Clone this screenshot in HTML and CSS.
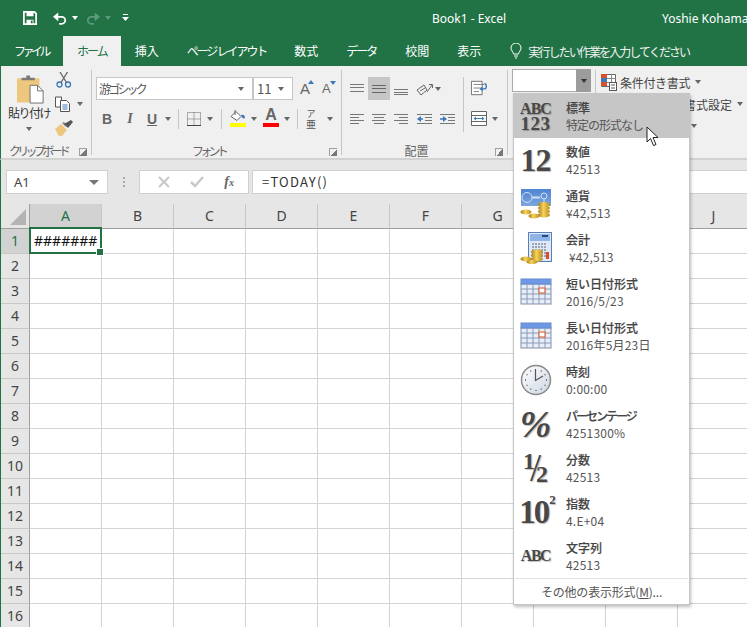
FILE: index.html
```html
<!DOCTYPE html>
<html lang="ja">
<head>
<meta charset="utf-8">
<title>Book1 - Excel</title>
<link rel="stylesheet" href="styles.css">
</head>
<body>
<svg class="defs" width="0" height="0">
  <defs>
    <linearGradient id="coin" x1="0" y1="0" x2="1" y2="0"><stop offset="0" stop-color="#a97a14"/><stop offset=".45" stop-color="#f5d35c"/><stop offset="1" stop-color="#b98a1e"/></linearGradient>
    <linearGradient id="clockface" x1="0" y1="0" x2="1" y2="1"><stop offset="0" stop-color="#ffffff"/><stop offset="1" stop-color="#cdd6e2"/></linearGradient>
    <linearGradient id="bill" x1="0" y1="0" x2="0" y2="1"><stop offset="0" stop-color="#4f84cf"/><stop offset="1" stop-color="#7ea6de"/></linearGradient>
    <symbol id="calendar" viewBox="0 0 32 28">
      <rect x="1" y="7" width="30" height="20" fill="#e8eef8" stroke="#7f8faf"/>
      <rect x="1" y="2" width="30" height="5" fill="#6c98e6" stroke="#6b8cc8"/>
      <path d="M1 12h30M1 17h30M1 22h30M7 7v20M13 7v20M19 7v20M25 7v20" stroke="#8c9ab8" fill="none"/>
      <rect x="19" y="11" width="6" height="5" fill="#fff" stroke="#e2501e"/>
      <path d="M2 28h30" stroke="#c9c9c9"/>
    </symbol>
  </defs>
</svg>
<div class="app">
  <header class="titlebar">
    <div class="qat">
      <svg class="save" width="16" height="16" viewBox="0 0 16 16"><path d="M1 1h12l2 2v12H1z" fill="none" stroke="#fff" stroke-width="2"/><rect x="4" y="1" width="8" height="5" fill="#fff"/><rect x="4" y="10" width="8" height="5" fill="#fff"/><rect x="9" y="11" width="2" height="3" fill="#217346"/></svg>
      <svg class="undo" width="14" height="13" viewBox="0 0 16 14"><path d="M3 5h7a4 4 0 0 1 0 8H7" fill="none" stroke="#fff" stroke-width="2"/><path d="M6 0v10L0 5z" fill="#fff"/></svg>
      <i class="caret white"></i>
      <svg class="redo" width="14" height="13" viewBox="0 0 16 14"><path d="M13 5H6a4 4 0 0 0 0 8h3" fill="none" stroke="#5d9a7b" stroke-width="2"/><path d="M10 0v10l6-5z" fill="#5d9a7b"/></svg>
      <i class="caret dim"></i>
      <svg class="custom" width="7" height="8" viewBox="0 0 7 8"><path d="M1 .5h5" stroke="#fff"/><path d="M0 3h7L3.500 7z" fill="#fff"/></svg>
    </div>
    <div class="doc-title">Book1 - Excel</div>
    <div class="user">Yoshie Kohama</div>
  </header>

  <nav class="tabs">
    <span class="tab file">ファイル</span>
    <span class="tab active">ホーム</span>
    <span class="tab">挿入</span>
    <span class="tab page">ページ レイアウト</span>
    <span class="tab">数式</span>
    <span class="tab data">データ</span>
    <span class="tab">校閲</span>
    <span class="tab">表示</span>
    <span class="tell">
      <svg width="12" height="16" viewBox="0 0 12 16"><path d="M3.500 11C3 8.500 1 7.500 1 5a5 5 0 0 1 10 0c0 2.500-2 3.500-2.500 6z M4 13h4M5 15h2" fill="none" stroke="#fff"/></svg>
      <span class="tell-text">実行したい作業を入力してください</span>
    </span>
  </nav>

  <section class="ribbon">
    <div class="group g-clip">
      <div class="body clip-body">
        <div class="paste">
          <svg width="28" height="29" viewBox="0 0 30 30"><rect x="0" y="3" width="24" height="26" rx="1" fill="#eec77f"/><path d="M5 5V2.500h5V0h4v2.500h5V5z" fill="#7a7a7a"/><path d="M14 10.500h8l6 6v13H14z" fill="#fff" stroke="#6a6a6a"/><path d="M22 10.500v6h6" fill="none" stroke="#6a6a6a"/></svg>
          <span class="paste-label">貼り付け</span>
          <i class="caret"></i>
        </div>
        <div class="clip-tools">
          <svg width="16" height="16" viewBox="0 0 16 16"><circle cx="3.500" cy="12.500" r="2.500" fill="none" stroke="#3d78b8" stroke-width="1.300"/><circle cx="12" cy="12.500" r="2.500" fill="none" stroke="#3d78b8" stroke-width="1.300"/><path d="M5 10.500 11.500 0M10.500 10.500 4 0" stroke="#666" stroke-width="1.300"/></svg>
          <div class="copy-row">
            <svg width="16" height="16" viewBox="0 0 16 16"><path d="M.5 1h6v10h-6z" fill="#fff" stroke="#555"/><path d="M5.500 4.500h6l3 3v8h-9z" fill="#fff" stroke="#555"/><path d="M7.500 9h5M7.500 11h5M7.500 13h5" stroke="#3d78b8"/></svg>
            <i class="caret"></i>
          </div>
          <svg width="18" height="16" viewBox="0 0 18 16"><path d="M0 9 6 4l6 6-5 6H4z" fill="#eec77f"/><path d="M7 3l2-1 3 3-1 2z" fill="#888"/><path d="M9 4l7-4 2 2-5 6z" fill="#555"/></svg>
        </div>
      </div>
      <div class="label"><span class="narrow-l">クリップボード</span><i class="launcher"></i></div>
    </div>

    <div class="group g-font">
      <div class="body">
        <div class="row">
          <div class="combo font-name"><span class="font-text">游ゴシック</span><i class="caret"></i></div>
          <div class="combo font-size"><span>11</span><i class="caret"></i></div>
          <span class="grow">A<i class="tri up"></i></span>
          <span class="grow small">A<i class="tri down"></i></span>
        </div>
        <div class="row second">
          <span class="tool t-b">B</span>
          <span class="tool t-i">I</span>
          <span class="tool t-u">U</span>
          <i class="caret"></i>
          <i class="vsep s1"></i>
          <svg class="i-border" width="14" height="14" viewBox="0 0 14 14"><path d="M.5.500h13v13h-13zM7 .5v13M.5 7h13" fill="none" stroke="#666" stroke-dasharray="1 1"/><path d="M0 13.500h14" stroke="#444"/></svg>
          <i class="caret"></i>
          <i class="vsep s2"></i>
          <span class="color-tool">
            <svg width="16" height="12" viewBox="0 0 16 12"><path d="M1 6.500 6 1.500l5 5-4 4z" fill="#fff" stroke="#666"/><path d="M5 0v5" stroke="#666"/><path d="M11 5c2-1 4 0 4 3-2 1-3 0-4-3z" fill="#3d78b8"/></svg>
            <i class="bar yellow"></i>
          </span>
          <i class="caret"></i>
          <span class="color-tool a-tool">
            <span class="a-glyph">A</span>
            <i class="bar red"></i>
          </span>
          <i class="caret"></i>
          <i class="vsep s3"></i>
          <span class="ruby"><span class="ruby-top">ア</span><span class="ruby-main">亜</span></span>
          <i class="caret"></i>
        </div>
      </div>
      <div class="label"><span class="narrow-l">フォント</span><i class="launcher"></i></div>
    </div>

    <div class="group g-align">
      <div class="body align-body">
        <div class="align-grid">
          <span class="cell-i"><svg width="16" height="12" viewBox="0 0 16 12"><path d="M1 1.500h14M1 4.500h14M1 8.500h14" stroke="#777"/></svg></span>
          <span class="cell-i on"><svg width="16" height="12" viewBox="0 0 16 12"><path d="M1 2.500h14M1 5.500h14M1 9.500h14" stroke="#666"/></svg></span>
          <span class="cell-i"><svg width="16" height="12" viewBox="0 0 16 12"><path d="M1 6.500h14M1 9.500h14M1 11.500h14" stroke="#777"/></svg></span>
          <span class="cell-i orient"><svg width="18" height="14" viewBox="0 0 18 14"><path d="M1 8 8 3l3 5-6 5z" fill="none" stroke="#666"/><path d="M4 9l5-3" stroke="#666"/><path d="M11 10 16 3M13 2.500h3.500V6" fill="none" stroke="#666"/></svg><i class="caret"></i></span>
          <span class="cell-i"><svg width="16" height="12" viewBox="0 0 16 12"><path d="M1 1.500h14M1 4.500h9M1 7.500h14M1 10.500h9" stroke="#777"/></svg></span>
          <span class="cell-i"><svg width="16" height="12" viewBox="0 0 16 12"><path d="M1 1.500h14M3 4.500h10M1 7.500h14M3 10.500h10" stroke="#777"/></svg></span>
          <span class="cell-i"><svg width="16" height="12" viewBox="0 0 16 12"><path d="M1 1.500h14M6 4.500h9M1 7.500h14M6 10.500h9" stroke="#777"/></svg></span>
          <span class="cell-i"><svg width="17" height="12" viewBox="0 0 17 12"><path d="M1 1.500h15M9 4.500h7M9 7.500h7M1 10.500h15" stroke="#777"/><path d="M7 6H2" stroke="#3d78b8" stroke-width="1.500"/><path d="M5 3 1 6l4 3z" fill="#3d78b8"/></svg></span>
          <span class="cell-i"><svg width="17" height="12" viewBox="0 0 17 12"><path d="M1 1.500h15M9 4.500h7M9 7.500h7M1 10.500h15" stroke="#777"/><path d="M1 6h5" stroke="#3d78b8" stroke-width="1.500"/><path d="M4 3l4 3-4 3z" fill="#3d78b8"/></svg></span>
        </div>
        <i class="vsep tall"></i>
        <div class="wrap-col">
          <svg width="16" height="16" viewBox="0 0 18 16"><path d="M.5.500h12v15H.5z" fill="#fff" stroke="#666"/><path d="M3 4h12M3 8h8M3 12h6" stroke="#777"/><path d="M15 3c3 0 3 6 0 6h-3" fill="none" stroke="#3d78b8" stroke-width="1.500"/><path d="M13 6 9.500 9 13 12z" fill="#3d78b8"/></svg>
          <span class="merge"><svg width="16" height="15" viewBox="0 0 16 15"><path d="M.5.500h15v14H.5zM.5 4.500h15M.5 10.500h15" fill="#fff" stroke="#666"/><path d="M3 7.500h10" stroke="#3d78b8"/><path d="M5 5.500 2.500 7.500 5 9.500zM11 5.500l2.500 2-2.500 2z" fill="#3d78b8"/></svg><i class="caret"></i></span>
        </div>
      </div>
      <div class="label"><span>配置</span><i class="launcher"></i></div>
    </div>

    <div class="group g-num">
      <div class="num-combo"><span class="num-field"></span><span class="num-arrow"><i class="caret dark"></i></span></div>
    </div>

    <div class="g-style">
      <div class="style-row">
        <svg width="16" height="17" viewBox="0 0 16 17"><path d="M.5.500h14v12H.5z" fill="#fff" stroke="#666"/><rect x="0" y="0" width="6" height="4" fill="#d9502e"/><rect x="0" y="4" width="6" height="4" fill="#3d78b8"/><rect x="0" y="8" width="6" height="4" fill="#d9502e"/><path d="M6 4.500h9M6 8.500h9M10.500 0v12" stroke="#888"/><rect x="8.500" y="8.500" width="7" height="8" fill="#fff" stroke="#555"/><path d="M10 11h4M10 14h4" stroke="#555"/></svg>
        <span class="style-text"><span class="narrow-s">条件付き書式</span></span><i class="caret"></i>
      </div>
      <div class="style-row indent"><span class="style-text"><span class="kana">テーブルとして</span>書式設定</span><i class="caret"></i></div>
      <div class="style-row indent"><span class="style-text kana">セルのスタイル</span><i class="caret"></i></div>
    </div>
  </section>

  <section class="formula">
    <div class="namebox"><span>A1</span><i class="caret big"></i></div>
    <div class="dots"><i></i><i></i><i></i></div>
    <div class="fbtns">
      <svg width="12" height="12" viewBox="0 0 12 12"><path d="M1 1l10 10M11 1 1 11" stroke="#c8c8c8" stroke-width="2"/></svg>
      <svg width="14" height="12" viewBox="0 0 14 12"><path d="M1 6l4 4 8-9" fill="none" stroke="#c8c8c8" stroke-width="2.500"/></svg>
      <span class="fx">f<sub>x</sub></span>
    </div>
    <div class="finput">=TODAY()</div>
  </section>

  <section class="sheet">
    <div class="srow head">
      <div class="rh corner"><i class="corner-tri"></i></div>
      <div class="ch on">A</div><div class="ch">B</div><div class="ch">C</div><div class="ch">D</div><div class="ch">E</div><div class="ch">F</div><div class="ch">G</div><div class="ch">H</div><div class="ch">I</div><div class="ch">J</div>
    </div>
    <div class="srow"><div class="rh on">1</div><div class="c sel-cell"><span class="hash">#######</span><i class="sel"></i><i class="handle"></i></div><div class="c"></div><div class="c"></div><div class="c"></div><div class="c"></div><div class="c"></div><div class="c"></div><div class="c"></div><div class="c"></div><div class="c"></div></div>
    <div class="srow"><div class="rh">2</div><div class="c"></div><div class="c"></div><div class="c"></div><div class="c"></div><div class="c"></div><div class="c"></div><div class="c"></div><div class="c"></div><div class="c"></div><div class="c"></div></div>
    <div class="srow"><div class="rh">3</div><div class="c"></div><div class="c"></div><div class="c"></div><div class="c"></div><div class="c"></div><div class="c"></div><div class="c"></div><div class="c"></div><div class="c"></div><div class="c"></div></div>
    <div class="srow"><div class="rh">4</div><div class="c"></div><div class="c"></div><div class="c"></div><div class="c"></div><div class="c"></div><div class="c"></div><div class="c"></div><div class="c"></div><div class="c"></div><div class="c"></div></div>
    <div class="srow"><div class="rh">5</div><div class="c"></div><div class="c"></div><div class="c"></div><div class="c"></div><div class="c"></div><div class="c"></div><div class="c"></div><div class="c"></div><div class="c"></div><div class="c"></div></div>
    <div class="srow"><div class="rh">6</div><div class="c"></div><div class="c"></div><div class="c"></div><div class="c"></div><div class="c"></div><div class="c"></div><div class="c"></div><div class="c"></div><div class="c"></div><div class="c"></div></div>
    <div class="srow"><div class="rh">7</div><div class="c"></div><div class="c"></div><div class="c"></div><div class="c"></div><div class="c"></div><div class="c"></div><div class="c"></div><div class="c"></div><div class="c"></div><div class="c"></div></div>
    <div class="srow"><div class="rh">8</div><div class="c"></div><div class="c"></div><div class="c"></div><div class="c"></div><div class="c"></div><div class="c"></div><div class="c"></div><div class="c"></div><div class="c"></div><div class="c"></div></div>
    <div class="srow"><div class="rh">9</div><div class="c"></div><div class="c"></div><div class="c"></div><div class="c"></div><div class="c"></div><div class="c"></div><div class="c"></div><div class="c"></div><div class="c"></div><div class="c"></div></div>
    <div class="srow"><div class="rh">10</div><div class="c"></div><div class="c"></div><div class="c"></div><div class="c"></div><div class="c"></div><div class="c"></div><div class="c"></div><div class="c"></div><div class="c"></div><div class="c"></div></div>
    <div class="srow"><div class="rh">11</div><div class="c"></div><div class="c"></div><div class="c"></div><div class="c"></div><div class="c"></div><div class="c"></div><div class="c"></div><div class="c"></div><div class="c"></div><div class="c"></div></div>
    <div class="srow"><div class="rh">12</div><div class="c"></div><div class="c"></div><div class="c"></div><div class="c"></div><div class="c"></div><div class="c"></div><div class="c"></div><div class="c"></div><div class="c"></div><div class="c"></div></div>
    <div class="srow"><div class="rh">13</div><div class="c"></div><div class="c"></div><div class="c"></div><div class="c"></div><div class="c"></div><div class="c"></div><div class="c"></div><div class="c"></div><div class="c"></div><div class="c"></div></div>
    <div class="srow"><div class="rh">14</div><div class="c"></div><div class="c"></div><div class="c"></div><div class="c"></div><div class="c"></div><div class="c"></div><div class="c"></div><div class="c"></div><div class="c"></div><div class="c"></div></div>
    <div class="srow"><div class="rh">15</div><div class="c"></div><div class="c"></div><div class="c"></div><div class="c"></div><div class="c"></div><div class="c"></div><div class="c"></div><div class="c"></div><div class="c"></div><div class="c"></div></div>
    <div class="srow"><div class="rh">16</div><div class="c"></div><div class="c"></div><div class="c"></div><div class="c"></div><div class="c"></div><div class="c"></div><div class="c"></div><div class="c"></div><div class="c"></div><div class="c"></div></div>
  </section>

  <div class="menu">
    <div class="item hover">
      <div class="ico serif two"><span>ABC</span><span class="big-num">123</span></div>
      <div class="txt"><b>標準</b><span class="tight">特定の形式なし</span></div>
    </div>
    <div class="item">
      <div class="ico serif twelve">12</div>
      <div class="txt"><b>数値</b><span>42513</span></div>
    </div>
    <div class="item">
      <div class="ico">
        <svg width="32" height="32" viewBox="0 0 32 32"><rect x="1" y="1" width="30" height="17" fill="url(#bill)"/><circle cx="7" cy="9.500" r="5" fill="none" stroke="#cfe0f6"/><path d="M12 9.500h8" stroke="#cfe0f6" stroke-width="2"/><circle cx="24" cy="8" r="3" fill="none" stroke="#cfe0f6"/><path d="M24 11v4" stroke="#cfe0f6"/><ellipse cx="24" cy="27" rx="6" ry="2.500" fill="url(#coin)"/><ellipse cx="24" cy="23.500" rx="6" ry="2.500" fill="url(#coin)"/><ellipse cx="24" cy="20" rx="6" ry="2.500" fill="url(#coin)"/><ellipse cx="24" cy="16.500" rx="6" ry="2.500" fill="url(#coin)"/><ellipse cx="6" cy="24" rx="5.500" ry="2.500" fill="url(#coin)"/><ellipse cx="14" cy="28" rx="5.500" ry="2.500" fill="url(#coin)"/></svg>
      </div>
      <div class="txt"><b>通貨</b><span>¥42,513</span></div>
    </div>
    <div class="item">
      <div class="ico">
        <svg width="32" height="32" viewBox="0 0 32 32"><rect x="8.500" y=".5" width="23" height="29" fill="#dfe9f7" stroke="#5a7fb8"/><rect x="10" y="2" width="20" height="7" fill="#8fb4e8"/><path d="M22 4h6" stroke="#274b86" stroke-width="2"/><path d="M12 12h15M12 15h15M12 18h15M12 21h15M12 24h15" stroke="#9aa4b2" stroke-width="2" stroke-dasharray="2 1"/><rect x="26" y="20" width="3" height="7" fill="#d9502e"/><ellipse cx="17" cy="27" rx="6" ry="2.500" fill="url(#coin)"/><ellipse cx="17" cy="23.500" rx="6" ry="2.500" fill="url(#coin)"/><ellipse cx="17" cy="20" rx="6" ry="2.500" fill="url(#coin)"/><ellipse cx="6" cy="27" rx="5.500" ry="2.500" fill="url(#coin)"/><ellipse cx="12" cy="30" rx="5.500" ry="2" fill="url(#coin)"/></svg>
      </div>
      <div class="txt"><b>会計</b><span>&nbsp;¥42,513</span></div>
    </div>
    <div class="item">
      <div class="ico cal"><svg width="32" height="28"><use href="#calendar"/></svg></div>
      <div class="txt"><b>短い日付形式</b><span>2016/5/23</span></div>
    </div>
    <div class="item">
      <div class="ico cal"><svg width="32" height="28"><use href="#calendar"/></svg></div>
      <div class="txt"><b>長い日付形式</b><span>2016年5月23日</span></div>
    </div>
    <div class="item">
      <div class="ico">
        <svg width="32" height="32" viewBox="0 0 32 32"><circle cx="16" cy="16" r="14.500" fill="url(#clockface)" stroke="#8a8a8a" stroke-width="1.500"/><path d="M15.500 5v11.500L23 12" fill="none" stroke="#555" stroke-width="1.200"/><path d="M16 27v-1M5 16h1M27 16h-1M10.500 6.500l.5 1M21.500 6.500l-.5 1M6.500 10.500l1 .5M25.500 10.500l-1 .5M6.500 21.500l1-.5M25.500 21.500l-1-.5M10.500 25.500l.5-1M21.500 25.500l-.5-1" stroke="#555" stroke-width="1.300"/></svg>
      </div>
      <div class="txt"><b>時刻</b><span>0:00:00</span></div>
    </div>
    <div class="item">
      <div class="ico serif percent">%</div>
      <div class="txt"><b class="kana-b">パーセンテージ</b><span>4251300%</span></div>
    </div>
    <div class="item">
      <div class="ico serif frac"><sup>1</sup><i class="slash">/</i><sub>2</sub></div>
      <div class="txt"><b>分数</b><span>42513</span></div>
    </div>
    <div class="item">
      <div class="ico serif ten">10<sup>2</sup></div>
      <div class="txt"><b>指数</b><span>4.E+04</span></div>
    </div>
    <div class="item">
      <div class="ico serif abc">ABC</div>
      <div class="txt"><b>文字列</b><span>42513</span></div>
    </div>
    <div class="more">その他の表示形式(<u>M</u>)...</div>
    <svg class="pointer" width="14" height="21" viewBox="0 0 14 21"><path d="M1 1v15l3.500-3.500 3 7 2.500-1-3-7h5z" fill="#fff" stroke="#222" stroke-linejoin="round"/></svg>
  </div>
</div>
</body>
</html>
```

FILE: styles.css
```css
* { box-sizing: border-box; }
html, body { margin: 0; padding: 0; }
body {
  width: 747px;
  height: 627px;
  overflow: hidden;
  background: #fff;
  font-family: "Noto Sans CJK JP", "Noto Sans", sans-serif;
  font-size: 12px;
  color: #444;
}
i { display: block; font-style: normal; }
.defs { position: absolute; }
.app { position: relative; width: 747px; height: 627px; overflow: hidden; }

/* title */
.titlebar {
  height: 36px;
  background: #217346;
  color: #fff;
  display: flex;
  align-items: center;
}
.qat { display: flex; align-items: center; padding-left: 23px; width: 139px; flex: none; }
.save { width: 14px; height: 14px; }
.undo { margin-left: 16px; }
.qat .caret { margin-left: 5px; }
.redo { margin-left: 8px; }
.custom { margin-left: 11px; }
.doc-title { margin-left: 293px; width: 230px; flex: none; font-family: "Noto Sans", sans-serif; font-size: 12px; white-space: nowrap; }
.user { font-family: "Noto Sans", sans-serif; font-size: 12px; white-space: nowrap; flex: none; }

/* carets */
.caret {
  width: 0; height: 0; flex: none;
  border-left: 3.5px solid transparent;
  border-right: 3.5px solid transparent;
  border-top: 4px solid #666;
}
.caret.white { border-top-color: #fff; }
.caret.dim { border-top-color: #5d9a7b; }
.caret.dark { border-top-color: #333; }
.caret.big { border-left-width: 5px; border-right-width: 5px; border-top-width: 5px; border-top-color: #777; }

/* tabs */
.tabs {
  height: 30px;
  background: #217346;
  display: flex;
  color: #fff;
  align-items: stretch;
}
.tab { padding: 0 14px; line-height: 30px; white-space: nowrap; }
.tab.file { padding: 0 15px 0 14px; letter-spacing: -3.500px; }
.tab.active { background: #f0f0f0; color: #217346; padding: 0 14px; letter-spacing: -2px; }
.tab.page { letter-spacing: -2.100px; }
.tab.data { letter-spacing: -2px; padding-right: 15px; }
.tell { display: flex; align-items: center; margin-left: 15px; }
.tell svg { margin-right: 6px; }
.tell-text { letter-spacing: -1.900px; color: #f2f2f2; }

/* ribbon */
.ribbon {
  height: 94px;
  background: #f0f0f0;
  border-bottom: 2px solid #d2d2d2;
  border-left: 1px solid #217346;
  display: flex;
  padding-top: 4px;
}
.group {
  height: 85px;
  border-right: 1px solid #c6c6c6;
  display: flex;
  flex-direction: column;
  flex: none;
}
.body { flex: 1; min-height: 0; }
.label {
  height: 16px;
  margin-bottom: -4px;
  padding-right: 16px;
  display: flex;
  align-items: center;
  justify-content: center;
  position: relative;
  color: #666;
  line-height: 16px;
}
.narrow-l { letter-spacing: -3.700px; white-space: nowrap; }
.launcher {
  position: absolute;
  right: 4px; bottom: 3px;
  width: 8px; height: 8px;
  border-left: 1px solid #a0a0a0;
  border-top: 1px solid #a0a0a0;
  background: linear-gradient(135deg, transparent 50%, #777 50%);
}
.g-clip { width: 91px; }
.clip-body { display: flex; padding-left: 5px; }
.paste { width: 46px; display: flex; flex-direction: column; align-items: center; padding-top: 5px; flex: none; }
.paste svg { margin-left: 4px; }
.paste-label { font-size: 12px; letter-spacing: -1.500px; line-height: 16px; margin-top: 1px; white-space: nowrap; color: #333; }
.paste .caret { margin-top: 6px; }
.clip-tools { margin-left: 3px; padding-top: 2px; display: flex; flex-direction: column; gap: 8px; }
.clip-tools > svg:first-child { margin-left: 1px; }
.copy-row { display: flex; align-items: center; }
.copy-row .caret { margin-left: 6px; }

.g-font { width: 250px; }
.g-font .body { padding: 7px 0 0 4px; }
.row { display: flex; align-items: center; height: 23px; }
.combo {
  height: 23px;
  background: #fff;
  border: 1px solid #c6c6c6;
  display: flex;
  align-items: center;
  justify-content: space-between;
  padding: 0 8px 0 2px;
  flex: none;
}
.font-name { width: 157px; }
.font-text { letter-spacing: -2.800px; color: #555; white-space: nowrap; }
.font-size { width: 40px; padding-left: 3px; font-size: 13px; margin-right: 6px; color: #555; }
.grow { position: relative; width: 22px; flex: none; font-family: "Liberation Sans", sans-serif; font-size: 15px; color: #666; padding-left: 1px; }
.grow.small { font-size: 13px; padding-left: 1px; }
.tri { position: absolute; left: 9px; width: 0; height: 0; border-left: 3px solid transparent; border-right: 3px solid transparent; }
.tri.up { top: 0; border-bottom: 4px solid #3d78b8; }
.tri.down { top: 0; border-top: 4px solid #3d78b8; }
.second { margin-top: 7px; }
.tool { font-family: "Liberation Sans", sans-serif; font-size: 14px; font-weight: 700; color: #666; text-align: center; flex: none; }
.t-b { width: 22px; }
.t-i { width: 24px; font-family: "Liberation Serif", serif; font-style: italic; }
.t-u { width: 20px; text-decoration: underline; margin-right: 3px; }
.vsep { width: 1px; height: 20px; background: #c6c6c6; flex: none; }
.s1 { margin: 0 8px 0 7px; }
.i-border { margin-right: 6px; flex: none; }
.s2 { margin: 0 8px 0 8px; }
.color-tool { width: 16px; flex: none; display: flex; flex-direction: column; align-items: center; margin: 0 5px 3px 0; height: 19px; justify-content: flex-end; }
.bar { width: 16px; height: 4px; margin-top: 1px; flex: none; }
.yellow { background: #ffff00; }
.red { background: #ff0000; }
.a-tool { margin-left: 6px; }
.a-glyph { font-family: "Liberation Sans", sans-serif; font-weight: 700; font-size: 16px; line-height: 14px; color: #666; }
.s3 { margin: 0 6px 0 7px; }
.ruby { width: 14px; flex: none; display: flex; flex-direction: column; align-items: center; margin-right: 9px; line-height: 9px; color: #555; }
.ruby-top { font-size: 9px; }
.ruby-main { font-size: 10px; line-height: 11px; }

.g-align { width: 166px; }
.align-body { display: flex; padding: 7px 0 0 4px; }
.align-grid { display: grid; grid-template-columns: 22px 22px 22px 24px 23px; grid-auto-rows: 23px; row-gap: 7px; width: 117px; flex: none; }
.cell-i { display: flex; align-items: center; justify-content: center; }
.cell-i.on { background: #c6c6c6; }
.cell-i.orient { grid-column: 4 / span 2; justify-content: flex-start; padding-left: 4px; }
.orient .caret { margin-left: 1px; }
.vsep.tall { height: 55px; }
.wrap-col { display: flex; flex-direction: column; padding: 3px 0 0 7px; gap: 15px; }
.merge { display: flex; align-items: center; }
.merge .caret { margin-left: 5px; }

.g-num { width: 88px; }
.num-combo { display: flex; margin: -1px 0 0 4px; height: 23px; }
.num-field { width: 64px; background: #fff; border: 1px solid #ababab; border-right: 0; }
.num-arrow { width: 15px; background: #9c9c9c; display: flex; align-items: center; justify-content: center; }

.g-style { padding: 1px 0 0 5px; }
.style-row { display: flex; align-items: center; height: 22px; white-space: nowrap; }
.style-row svg { margin-right: 3px; }
.style-row.indent { padding-left: 19px; }
.style-text { color: #444; margin-right: 5px; }
.narrow-s { letter-spacing: -.3px; }
.kana { letter-spacing: -2.700px; }
.style-text.kana { margin-right: 6px; }

/* formula bar */
.formula {
  height: 44px;
  background: #e6e6e6;
  border-left: 1px solid #217346;
  display: flex;
  padding: 10px 0 0 5px;
}
.namebox {
  width: 102px; height: 24px;
  background: #fff;
  border: 1px solid #d0d0d0;
  display: flex; align-items: center; justify-content: space-between;
  padding: 0 8px 0 7px;
  font-family: "Noto Sans", sans-serif;
  font-size: 13px;
}
.dots { width: 31px; display: flex; flex-direction: column; align-items: center; gap: 2px; padding-top: 7px; }
.dots i { width: 2px; height: 2px; background: #aaa; }
.fbtns {
  width: 110px; height: 24px;
  background: #fff;
  border: 1px solid #d0d0d0;
  display: flex; align-items: center; justify-content: space-around;
  padding: 0 4px 0 8px;
}
.fx { font-family: "Liberation Serif", serif; font-style: italic; font-weight: 700; font-size: 14px; color: #666; line-height: 1; }
.fx sub { font-size: 10px; vertical-align: baseline; }
.finput {
  flex: 1; height: 24px; margin-left: 3px;
  background: #fff;
  border: 1px solid #d0d0d0;
  border-right: 0;
  padding-left: 9px;
  line-height: 22px;
  font-size: 13px;
  color: #333;
  letter-spacing: 1.200px;
}

/* sheet */
.sheet { border-left: 1px solid #217346; background: #fff; }
.srow { display: flex; height: 25px; }
.rh {
  width: 29px; flex: none;
  background: #e6e6e6;
  border-right: 1px solid #9f9f9f;
  border-bottom: 1px solid #c8c8c8;
  text-align: center;
  font-family: "Noto Sans", sans-serif;
  font-size: 14px;
  line-height: 24px;
  color: #444;
}
.rh.on { background: #d2d2d2; color: #217346; }
.rh.corner { position: relative; border-bottom: 1px solid #9f9f9f; }
.corner-tri {
  position: absolute; right: 3px; bottom: 3px;
  width: 0; height: 0;
  border-left: 16px solid transparent;
  border-bottom: 16px solid #b4b4b4;
}
.ch {
  width: 72px; flex: none;
  background: #e6e6e6;
  border-right: 1px solid #c8c8c8;
  border-bottom: 1px solid #9f9f9f;
  text-align: center;
  font-family: "Noto Sans", sans-serif;
  font-size: 14px;
  line-height: 24px;
  color: #444;
}
.ch.on { background: #d2d2d2; color: #217346; }
.c { width: 72px; flex: none; border-right: 1px solid #d4d4d4; border-bottom: 1px solid #d4d4d4; }
.sel-cell { position: relative; }
.hash { display: block; padding-left: 4px; font-family: "Noto Sans", sans-serif; font-size: 14px; line-height: 24px; color: #111; white-space: nowrap; }
.sel { position: absolute; left: -1px; top: -2px; right: -1px; bottom: -1px; border: 2px solid #217346; }
.handle { position: absolute; right: -2px; bottom: -2px; width: 6px; height: 6px; background: #217346; box-shadow: 0 0 0 1px #fff; }

/* menu */
.menu {
  position: absolute;
  left: 513px; top: 93px;
  width: 177px; height: 512px;
  background: #fff;
  border: 1px solid #c6c6c6;
  box-shadow: 1px 2px 3px rgba(0,0,0,.25);
}
.item { height: 44px; display: flex; }
.item.hover { background: #c6c6c6; }
.ico { width: 52px; flex: none; display: flex; align-items: center; justify-content: center; padding-right: 9px; }
.cal { padding-bottom: 3px; }
.serif { font-family: "Liberation Serif", serif; font-weight: 700; color: #484848; text-shadow: 1px 1px 1px rgba(0,0,0,.25); }
.two { flex-direction: column; font-size: 16px; line-height: 15px; letter-spacing: -1px; }
.big-num { font-size: 19px; letter-spacing: .5px; line-height: 15px; }
.twelve { font-size: 32px; letter-spacing: -1px; }
.percent { font-size: 38px; font-style: italic; line-height: 44px; }
.frac { font-size: 24px; align-items: center; }
.frac sup { font-size: 24px; line-height: 1; align-self: flex-start; margin-top: 3px; }
.frac .slash { font-size: 40px; font-weight: 400; line-height: 1; margin: 0 -5px; }
.frac sub { font-size: 24px; line-height: 1; align-self: flex-end; margin-bottom: 4px; }
.ten { font-size: 33px; letter-spacing: -2px; align-items: center; padding-left: 3px; padding-right: 8px; }
.ten sup { font-size: 13px; align-self: flex-start; margin: 3px 0 0 1px; line-height: 1; letter-spacing: 0; }
.abc { font-size: 16px; letter-spacing: -1.500px; }
.txt { display: flex; flex-direction: column; line-height: 17px; padding-top: 5px; white-space: nowrap; color: #555; }
.txt b { font-weight: 500; color: #444; -webkit-text-stroke: .15px #444; }
.txt span { color: #555; letter-spacing: .2px; }
.txt .tight { letter-spacing: -1px; }
.txt .kana-b { letter-spacing: -2px; }
.item .ico svg { display: block; }
.more {
  margin: 0 1px;
  border-top: 1px solid #e0e0e0;
  height: 26px;
  text-align: center;
  line-height: 26px;
  color: #555;
  letter-spacing: -.2px;
  white-space: nowrap;
}
.pointer { position: absolute; left: 132px; top: 32px; }
```
